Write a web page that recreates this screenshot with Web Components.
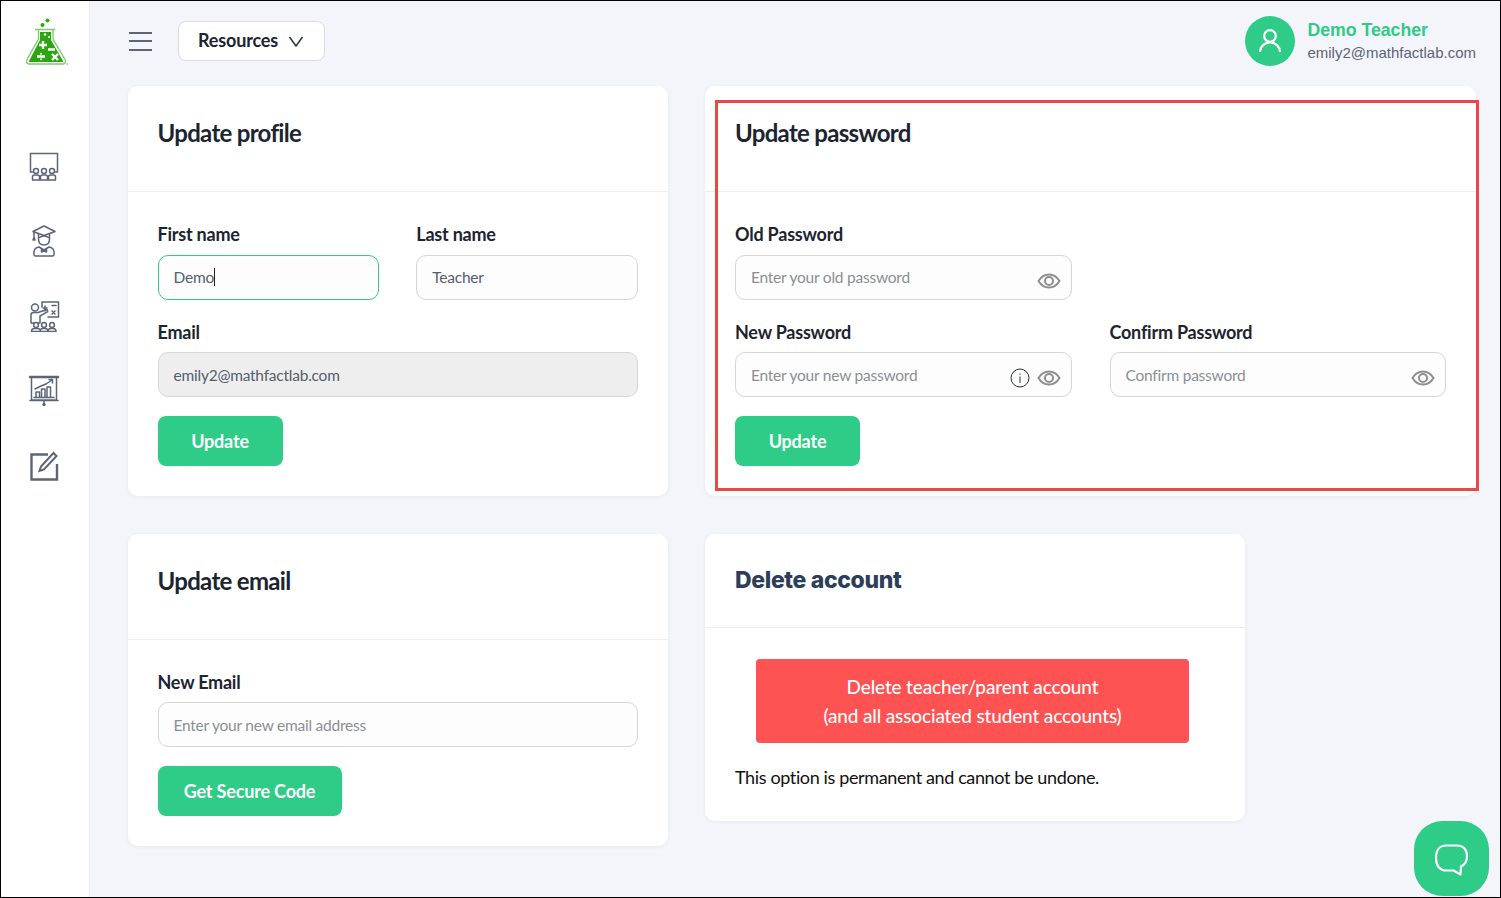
<!DOCTYPE html>
<html lang="en">
<head>
<meta charset="utf-8">
<title>Account settings</title>
<style>
  html, body { margin: 0; height: 100%; }
  body { font-family: Lato, "Liberation Sans", sans-serif; }
</style>
</head>
<body>
<app-shell>
  <side-bar slot="side"></side-bar>
  <top-bar slot="top"></top-bar>

  <settings-card title="Update profile" style="--nudge:-.5px">
    <form-row style="grid-template-columns:221px 222px">
      <form-field label="First name" value="Demo" focused></form-field>
      <form-field label="Last name" value="Teacher" style="--nudge:.3px"></form-field>
    </form-row>
    <form-field label="Email" value="emily2@mathfactlab.com" disabled low></form-field>
    <green-button style="width:125px">Update</green-button>
  </settings-card>

  <settings-card title="Update password" marked>
    <form-row style="grid-template-columns:337px 336px;column-gap:38px">
      <form-field label="Old Password" placeholder="Enter your old password" eye></form-field>
    </form-row>
    <form-row style="grid-template-columns:337px 336px;column-gap:38px">
      <form-field label="New Password" placeholder="Enter your new password" eye info low></form-field>
      <form-field label="Confirm Password" placeholder="Confirm password" eye low style="--nudge:-.5px"></form-field>
    </form-row>
    <green-button style="width:125px">Update</green-button>
  </settings-card>

  <settings-card title="Update email" style="--body-top:30px;--nudge:-.5px">
    <form-field label="New Email" placeholder="Enter your new email address" low></form-field>
    <green-button style="width:184px">Get Secure Code</green-button>
  </settings-card>

  <delete-card></delete-card>
</app-shell>

<script>
const ICON = 'fill="none" stroke="#5b6577" stroke-width="1.5" stroke-linecap="round" stroke-linejoin="round"';

class AppShell extends HTMLElement {
  constructor() {
    super();
    this.attachShadow({ mode: 'open' });
    this.shadowRoot.innerHTML = `
      <style>
        :host {
          display: flex;
          box-sizing: border-box;
          width: 100%;
          height: 100vh;
          border: 1px solid #000;
          background: #f3f5fa;
          position: relative;
          overflow: hidden;
        }
        main { flex: 1; min-width: 0; display: flex; flex-direction: column; }
        .grid {
          display: grid;
          grid-template-columns: 540px 771px;
          column-gap: 37px;
          row-gap: 38px;
          align-items: start;
          padding-left: 38px;
        }
        .chat {
          position: absolute;
          left: 1413px;
          top: 820px;
          width: 75px;
          height: 75px;
          border-radius: 38% / 38%;
          background: #2ecc87;
          display: flex;
          align-items: center;
          justify-content: center;
        }
      </style>
      <slot name="side"></slot>
      <main>
        <slot name="top"></slot>
        <div class="grid"><slot></slot></div>
      </main>
      <div class="chat">
        <svg width="36" height="36" viewBox="0 0 36 36" fill="none" stroke="#fff" stroke-width="2.200" stroke-linejoin="round">
          <path d="M12 4.500h11c6 0 10 4 10 10.500 0 5.500-2.500 9-6 10.500l-.5 8-7-4H12C6 29.500 2 25 2 17S6 4.500 12 4.500z"/>
        </svg>
      </div>`;
  }
}

class SideBar extends HTMLElement {
  constructor() {
    super();
    this.attachShadow({ mode: 'open' });
    this.shadowRoot.innerHTML = `
      <style>
        :host {
          display: block;
          box-sizing: border-box;
          width: 89px;
          height: 100%;
          background: #fff;
          border-right: 1px solid #e3efec;
          flex: none;
        }
        .logo { height: 127px; padding: 17px 0 0 24px; box-sizing: border-box; }
        .logo svg { display: block; }
        nav { display: flex; flex-direction: column; align-items: flex-start; padding-left: 27px; }
        nav a { display: flex; align-items: center; height: 75px; }
      </style>
      <div class="logo">
        <svg width="44" height="48" viewBox="0 0 44 48">
          <circle cx="22.500" cy="2.500" r="2" fill="#2aa70f"/>
          <circle cx="17.500" cy="7" r="2" fill="#2aa70f"/>
          <path d="M10 11.500h20M13.500 12v9L2 41.500q-1.500 4 2 4.500h34q3.500-.5 2-4.500L28 21v-9" fill="none" stroke="#7ccb6c" stroke-width="1.300"/>
          <path d="M15 14h11v8l12 21q.5 1-1 1H5q-1.500 0-1-1l11-21z" fill="#2aa70f"/>
          <circle cx="20" cy="16.500" r="1.300" fill="#fff"/>
          <circle cx="24" cy="19" r="1" fill="#fff"/>
          <path d="M18 23v8M14 27h8M23 31.500h7M12 38.500h8M27 36l6 6M33 36l-6 6" stroke="#fff" stroke-width="2.400" fill="none"/>
          <circle cx="16" cy="35.800" r="1" fill="#fff"/>
          <circle cx="16" cy="41.200" r="1" fill="#fff"/>
          <circle cx="42.300" cy="46" r="1" fill="#9fd693"/>
        </svg>
      </div>
      <nav>
        <a><svg width="32" height="32" viewBox="0 0 32 32" ${ICON}>
          <path d="M4.500 22H2.500V3.500h27V22h-2"/>
          <circle cx="8" cy="21" r="2.500" fill="#fff"/><circle cx="16" cy="21" r="2.500" fill="#fff"/><circle cx="24" cy="21" r="2.500" fill="#fff"/>
          <path d="M4.500 30v-3q0-2 2-2h3q2 0 2 2v3zM12.500 30v-3q0-2 2-2h3q2 0 2 2v3zM20.500 30v-3q0-2 2-2h3q2 0 2 2v3z"/>
        </svg></a>
        <a><svg width="32" height="32" viewBox="0 0 32 32" ${ICON}>
          <path d="M16 1L27 6.500 16 10.500 5 6.500z"/>
          <path d="M6 7v5M5 15l1-3 1 3z"/>
          <path d="M10.500 9v5q0 6 5.500 6t5.500-6V9M10.500 13q3-2 5.500-2t5.500 2"/>
          <path d="M7.500 31q-1.500 0-1.500-2v-2q0-4 5-5l5 3 5-3q5 1 5 5v2q0 2-1.500 2zM13.500 24l2.500 1.500 2.500-1.500v3l-2.500-1-2.500 1z"/>
        </svg></a>
        <a><svg width="32" height="32" viewBox="0 0 32 32" ${ICON}>
          <path d="M14 7V2h16.500v15H20"/>
          <circle cx="7" cy="7.500" r="3.500"/>
          <path d="M3 23V15q0-2.500 2.500-2.500H10l9-3 .8 2.200L12 16v7zM17 6v5M15 8h4M24 5.500h4M24 11l3 3M27 11l-3 3"/>
          <circle cx="8" cy="25" r="2.400" fill="#fff"/><circle cx="16" cy="25" r="2.400" fill="#fff"/><circle cx="24" cy="25" r="2.400" fill="#fff"/>
          <path d="M3.500 31.500q0-3 3-3h3q3 0 3 3zM12 31.500q0-3 3-3h2q3 0 3 3zM20 31.500q0-3 3-3h2q3 0 3 3z"/>
        </svg></a>
        <a><svg width="32" height="32" viewBox="0 0 32 32" ${ICON}>
          <path d="M2 2h28" stroke-width="2.400"/>
          <path d="M3.500 2v23h25V2M2 25.500h28"/>
          <path d="M16 25.500v2"/><circle cx="16" cy="29.500" r="1.700" fill="#5b6577" stroke="none"/>
          <path d="M8 22v-5h3.500v5M13.500 22v-8h3.500v8M19 22V12h3.500v10"/>
          <path d="M7 14l6-3 5-2 6-4M21 4.500h3.500V8"/>
          <path d="M6 22.500h20"/>
        </svg></a>
        <a><svg width="32" height="32" viewBox="0 0 32 32" fill="none" stroke="#5b6577" stroke-width="2.400" stroke-linejoin="miter">
          <path d="M20 4.500H3.500v25H29V14"/>
          <path d="M25.500 3l3 3L16 19.500l-4.500 1.500 1.500-4.500z" stroke-width="2"/>
        </svg></a>
      </nav>`;
  }
}

class TopBar extends HTMLElement {
  constructor() {
    super();
    this.attachShadow({ mode: 'open' });
    this.shadowRoot.innerHTML = `
      <style>
        :host {
          display: flex;
          align-items: center;
          height: 85px;
          padding: 0 24px 5px 39px;
          box-sizing: border-box;
        }
        .burger { width: 23px; height: 19px; display: flex; flex-direction: column; justify-content: space-between; margin-right: 26px; }
        .burger i { display: block; height: 2px; background: #5b6577; }
        .res {
          display: flex;
          align-items: center;
          justify-content: center;
          gap: 10px;
          box-sizing: border-box;
          width: 147px;
          height: 40px;
          background: #fff;
          border: 1px solid #dcdcdc;
          border-radius: 8px;
          font: 700 18px/18px Lato, sans-serif;
          letter-spacing: -.15px;
          color: #1c2430;
          padding: 0 1px 2px 0;
        }
        .res svg { margin-top: 2px; }
        .user { margin-left: auto; display: flex; align-items: center; gap: 12px; }
        .avatar {
          width: 50px;
          height: 50px;
          border-radius: 50%;
          background: #2ecc87;
          display: flex;
          align-items: center;
          justify-content: center;
        }
        .name { font: bold 17.700px/24px "Liberation Sans", sans-serif; color: #2ecc87; }
        .mail { font: 15px/22px "Liberation Sans", sans-serif; color: #5b6577; }
      </style>
      <div class="burger"><i></i><i></i><i></i></div>
      <div class="res">Resources
        <svg width="16" height="16" viewBox="0 0 16 16" fill="none" stroke="#2b3240" stroke-width="1.500"><path d="M1.500 4l6.500 9 6.500-9"/></svg>
      </div>
      <div class="user">
        <div class="avatar">
          <svg width="24" height="26" viewBox="0 0 24 26" fill="none" stroke="#fff" stroke-width="2.200">
            <circle cx="12" cy="8" r="5.800"/><path d="M2 24c0-5 4-9.500 10-9.500s10 4.500 10 9.500"/>
          </svg>
        </div>
        <div>
          <div class="name">Demo Teacher</div>
          <div class="mail">emily2@mathfactlab.com</div>
        </div>
      </div>`;
  }
}

class SettingsCard extends HTMLElement {
  constructor() {
    super();
    this.attachShadow({ mode: 'open' });
  }
  connectedCallback() {
    this.shadowRoot.innerHTML = `
      <style>
        :host {
          display: block;
          position: relative;
          background: #fff;
          border-radius: 10px;
          box-shadow: 0 1px 4px rgba(40, 50, 70, .06);
        }
        header {
          box-sizing: border-box;
          height: 106px;
          padding: 30px 30px 0 calc(30px + var(--nudge, 0px));
          border-bottom: 1px solid #eceef1;
          font: 700 24px/34px Lato, sans-serif;
          letter-spacing: -.7px;
          color: #1c2430;
        }
        .body { display: flex; flex-direction: column; align-items: flex-start; gap: 19px; padding: var(--body-top, 31px) 30px 30px; }
        ::slotted(form-row:first-child) { margin-bottom: 1px; }
        .mark { position: absolute; left: 10px; top: 14px; right: -3px; bottom: 5px; border: 3px solid #ea4747; pointer-events: none; }
      </style>
      <header>${this.getAttribute('title')}</header>
      <div class="body"><slot></slot></div>
      ${this.hasAttribute('marked') ? '<div class="mark"></div>' : ''}`;
  }
}

class FormRow extends HTMLElement {
  constructor() {
    super();
    this.attachShadow({ mode: 'open' });
    this.shadowRoot.innerHTML = `
      <style>:host { display: grid; grid-template-columns: 1fr 1fr; column-gap: 37px; width: 100%; }</style>
      <slot></slot>`;
  }
}

class FormField extends HTMLElement {
  constructor() {
    super();
    this.attachShadow({ mode: 'open' });
  }
  connectedCallback() {
    const value = this.getAttribute('value');
    const text = value || this.getAttribute('placeholder') || '';
    const eye = `<svg class="ic" width="24" height="16" viewBox="0 0 24 16" fill="none" stroke="#8f8f8f" stroke-width="2"><path d="M1.500 8C4 3.800 7.500 1.500 12 1.500S20 3.800 22.500 8C20 12.200 16.500 14.500 12 14.500S4 12.200 1.500 8z"/><circle cx="12" cy="8" r="4"/></svg>`;
    const info = `<svg class="ic" width="20" height="20" viewBox="0 0 20 20" fill="none" stroke="#2b3240"><circle cx="10" cy="10" r="9"/><path d="M10 8.500V15M10 5.500v1.300"/></svg>`;
    this.shadowRoot.innerHTML = `
      <style>
        :host { display: block; width: 100%; }
        label {
          display: block;
          font: 700 18px/22px Lato, sans-serif;
          letter-spacing: -.22px;
          color: #1c2430;
          padding-bottom: 2px;
          margin: 0 0 8px var(--nudge, 0px);
        }
        :host([low]) label { padding: 1px 0 1px; }
        .box {
          display: flex;
          align-items: center;
          box-sizing: border-box;
          height: 45px;
          padding: 0 10px 0 15px;
          border: 1px solid #d6d6d6;
          border-radius: 10px;
          background: #fdfdfd;
          font: 15.500px Lato, sans-serif;
          letter-spacing: -.23px;
          color: ${value ? '#555e6c' : '#8a8f96'};
        }
        :host([focused]) .box { border-color: #2ecc87; }
        :host([disabled]) .box { background: #eeeeee; }
        .caret { display: inline-block; width: 1px; height: 18px; background: #222; vertical-align: -3px; margin-left: .5px; }
        .txt { flex: 1; white-space: nowrap; margin: 0 0 2px var(--nudge, 0px); }
        :host([low]) .txt { margin-bottom: 0; }
        .ic { margin-top: 6px; margin-left: 7px; flex: none; }
      </style>
      <label>${this.getAttribute('label')}</label>
      <div class="box">
        <span class="txt">${text}${this.hasAttribute('focused') ? '<span class="caret"></span>' : ''}</span>
        ${this.hasAttribute('info') ? info : ''}
        ${this.hasAttribute('eye') ? eye : ''}
      </div>`;
  }
}

class GreenButton extends HTMLElement {
  constructor() {
    super();
    this.attachShadow({ mode: 'open' });
    this.shadowRoot.innerHTML = `
      <style>
        :host {
          display: flex;
          align-items: center;
          justify-content: center;
          box-sizing: border-box;
          height: 50px;
          padding-right: calc(var(--nudge, 0px) * -2);
          border-radius: 8px;
          background: #2ecc87;
          color: #fff;
          font: 700 18px Lato, sans-serif;
          letter-spacing: -.17px;
        }
      </style>
      <slot></slot>`;
  }
}

class DeleteCard extends HTMLElement {
  constructor() {
    super();
    this.attachShadow({ mode: 'open' });
    this.shadowRoot.innerHTML = `
      <style>
        :host {
          display: block;
          width: 540px;
          background: #fff;
          border-radius: 10px;
          box-shadow: 0 1px 4px rgba(40, 50, 70, .06);
        }
        header {
          box-sizing: border-box;
          height: 94px;
          padding: 30px 30px 0;
          border-bottom: 1px solid #eceef1;
          font: 800 23px/32px Inter, sans-serif;
          letter-spacing: -.35px;
          color: #2c3e5a;
        }
        .danger {
          box-sizing: border-box;
          width: 433px;
          height: 84px;
          margin: 31px 0 0 51px;
          padding-top: 13px;
          border-radius: 4px;
          background: #ff5252;
          color: #fff;
          text-align: center;
          font: 500 19px/29px Lato, sans-serif;
          letter-spacing: -.15px;
        }
        p { margin: 20px 30px 30px; font: 18px/28px Lato, sans-serif; letter-spacing: -.37px; color: #111; }
      </style>
      <header>Delete account</header>
      <div class="danger">Delete teacher/parent account<br>(and all associated student accounts)</div>
      <p>This option is permanent and cannot be undone.</p>`;
  }
}

customElements.define('app-shell', AppShell);
customElements.define('side-bar', SideBar);
customElements.define('top-bar', TopBar);
customElements.define('settings-card', SettingsCard);
customElements.define('form-row', FormRow);
customElements.define('form-field', FormField);
customElements.define('green-button', GreenButton);
customElements.define('delete-card', DeleteCard);
</script>
</body>
</html>
